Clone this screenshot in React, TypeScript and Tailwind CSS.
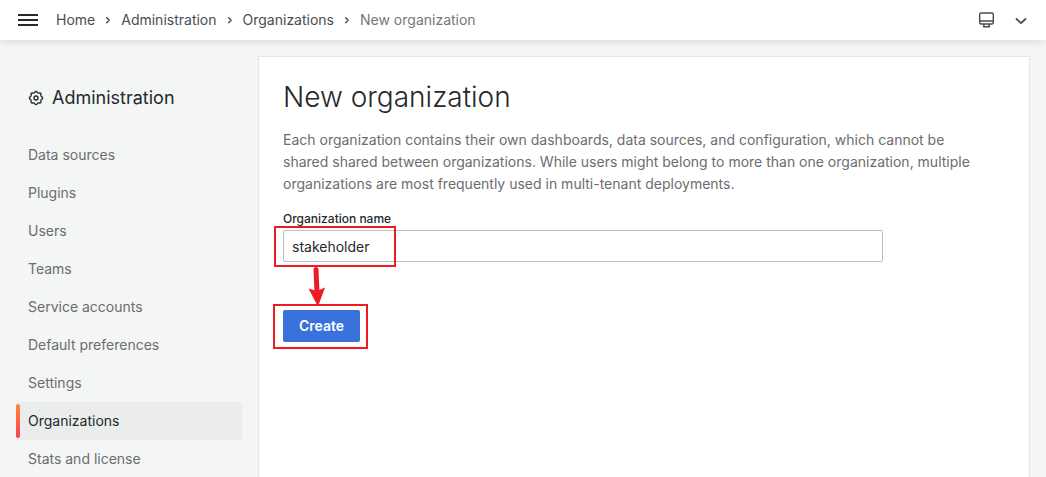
import { useState } from "react";

const sections = [
  "Data sources",
  "Plugins",
  "Users",
  "Teams",
  "Service accounts",
  "Default preferences",
  "Settings",
  "Organizations",
  "Stats and license",
];

const crumbs = ["Home", "Administration", "Organizations"];

// Eight-lobed outline of the cog, sampled around a 24x24 view box.
const cogOutline = Array.from({ length: 96 }, (_, i) => {
  const angle = (i / 96) * Math.PI * 2;
  const radius = 9 + 0.9 * Math.cos(8 * angle);
  return `${(12 + radius * Math.cos(angle)).toFixed(2)},${(12 + radius * Math.sin(angle)).toFixed(2)}`;
}).join(" ");

function Chevron() {
  return (
    <svg viewBox="0 0 16 16" className="size-4 text-[#4a4c50]" fill="none" stroke="currentColor" strokeWidth="1.4" strokeLinecap="round" strokeLinejoin="round" aria-hidden="true">
      <path d="M6.7 5.7 9.2 8.200l-2.500 2.500" />
    </svg>
  );
}

function CogIcon() {
  return (
    <svg viewBox="0 0 24 24" className="size-4" fill="none" stroke="currentColor" strokeWidth="2" strokeLinejoin="round" aria-hidden="true">
      <polygon points={cogOutline} />
      <circle cx="12" cy="12" r="3" />
    </svg>
  );
}

function MonitorIcon() {
  return (
    <svg viewBox="0 0 18 18" className="size-[18px]" fill="none" stroke="currentColor" strokeWidth="1.4" strokeLinejoin="round" aria-hidden="true">
      <rect x="1.700" y="2" width="13.600" height="11" rx="1.500" />
      <path d="M1.700 10h13.600M6.300 13l-.8 2.700h6l-.8-2.700" />
    </svg>
  );
}

export default function App() {
  const [name, setName] = useState("stakeholder");

  return (
    <div className="flex h-screen flex-col overflow-hidden bg-[#f4f5f5] font-['Inter',sans-serif] text-sm text-[#24292e]">
      <header className="relative flex h-10 shrink-0 items-center justify-between bg-white px-4 shadow-[0_1px_8px_rgba(0,0,0,0.12)]">
        <div className="flex items-center gap-4">
          <button type="button" aria-label="Open menu" className="flex size-6 flex-col items-center justify-center gap-[3px]">
            <span className="h-0.5 w-5 bg-current" />
            <span className="h-0.5 w-5 bg-current" />
            <span className="h-0.5 w-5 bg-current" />
          </button>
          <nav aria-label="Breadcrumbs">
            <ol className="flex items-center gap-[5px]">
              {crumbs.map((crumb) => (
                <li key={crumb} className="flex items-center gap-[5px]">
                  <a href="#" className="text-[#4a4c50]">{crumb}</a>
                  <Chevron />
                </li>
              ))}
              <li aria-current="page" className="text-[#75777a]">New organization</li>
            </ol>
          </nav>
        </div>
        <div className="flex items-center gap-4 text-[#4a4c50]">
          <button type="button" aria-label="Kiosk mode"><MonitorIcon /></button>
          <button type="button" aria-label="Toggle top bar">
            <svg viewBox="0 0 18 18" className="size-[18px]" fill="none" stroke="currentColor" strokeWidth="1.8" strokeLinecap="round" strokeLinejoin="round" aria-hidden="true">
              <path d="m4.500 8 4.500 4.200L13.500 8" />
            </svg>
          </button>
        </div>
      </header>

      <div className="flex min-h-0 grow gap-4 px-4 pt-4">
        <nav aria-label="Administration" className="w-[226px] shrink-0">
          <h2 className="mt-6 flex items-center gap-2 px-3 text-lg leading-9 font-normal">
            <CogIcon />
            Administration
          </h2>
          <ul className="mt-5">
            {sections.map((section) => {
              const active = section === "Organizations";
              return (
                <li key={section}>
                  <a
                    href="#"
                    aria-current={active ? "page" : undefined}
                    className={
                      active
                        ? "relative flex h-[38px] items-center rounded-xs bg-[#ebecec] px-3"
                        : "flex h-[38px] items-center px-3 text-[#6b6d70]"
                    }
                  >
                    {active && <span className="absolute inset-y-0.5 left-0 w-1 rounded-xs bg-linear-to-b from-[#ff8833] to-[#f53e4c]" />}
                    {section}
                  </a>
                </li>
              );
            })}
          </ul>
        </nav>

        <main className="min-w-0 grow border border-b-0 border-[#e4e5e6] bg-white p-6">
          <h1 className="text-[28px] leading-8 font-light">New organization</h1>
          <p className="mt-4 max-w-[704px] leading-[22px] text-[#6b6d70]">
            Each organization contains their own dashboards, data sources, and configuration, which cannot be shared
            shared between organizations. While users might belong to more than one organization, multiple organizations
            are most frequently used in multi-tenant deployments.
          </p>
          <form className="mt-4 max-w-[600px]" onSubmit={(event) => event.preventDefault()}>
            <label htmlFor="org-name" className="block text-xs leading-4 font-medium">Organization name</label>
            <div className="relative mt-[3px]">
              <input
                id="org-name"
                value={name}
                onChange={(event) => setName(event.target.value)}
                className="block h-8 w-full rounded-xs border border-[#bdbebe] bg-white px-2 outline-none"
              />
              <span className="pointer-events-none absolute -top-1 -left-[9px] h-[41px] w-[122px] border-2 border-[#ed1c24]" />
              <svg viewBox="0 0 20 40" className="pointer-events-none absolute top-[37px] left-6 h-10 w-5 text-[#ed1c24]" aria-hidden="true">
                <path d="m9 2.500 1 23" stroke="currentColor" strokeWidth="5" strokeLinecap="round" />
                <path d="M1.500 21.500 10 24l8-3.500L11 39.500z" fill="currentColor" />
              </svg>
            </div>
            <div className="relative mt-12 w-fit">
              <button type="submit" className="block h-8 rounded-xs bg-[#3871dc] px-4 font-semibold text-white">Create</button>
              <span className="pointer-events-none absolute -top-1.5 -right-2 -bottom-[7px] -left-2.5 border-2 border-[#ed1c24]" />
            </div>
          </form>
        </main>
      </div>
    </div>
  );
}
